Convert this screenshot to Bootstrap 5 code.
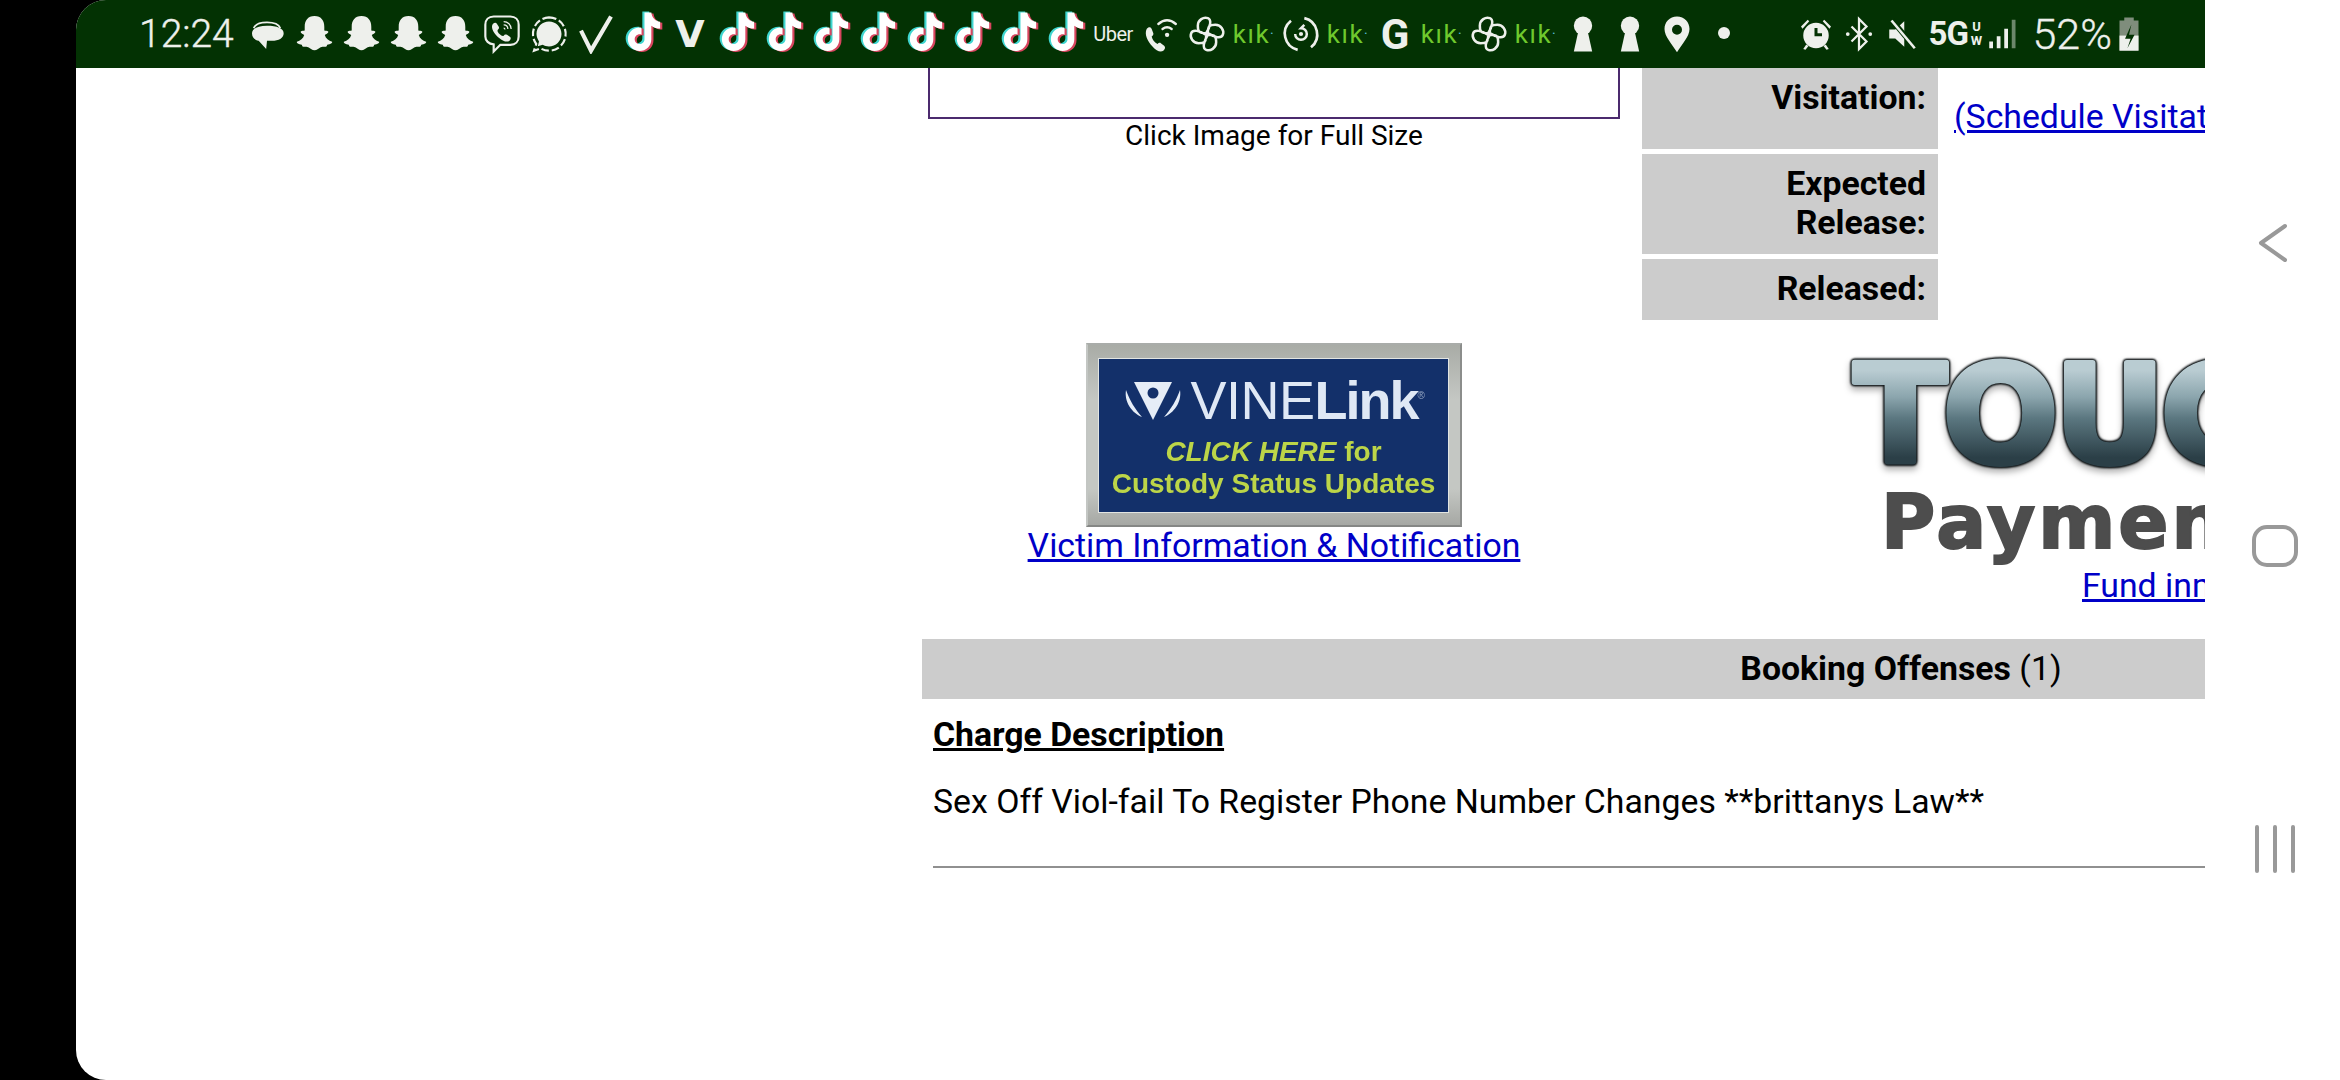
<!DOCTYPE html>
<html lang="en">
<head>
  <meta charset="UTF-8" />
  <title>Booking Details</title>
  <link href="https://cdn.jsdelivr.net/npm/bootstrap@5.3.3/dist/css/bootstrap.min.css" rel="stylesheet">
  <style>
    html, body { height: 100%; }
    body { background: #000; font-family: Roboto, "Liberation Sans", sans-serif; color: #000; overflow: hidden; }
    a { color: #0000c8; }
    .shell { height: 1080px; padding-left: 76px; }
    .screen { background: #fff; border-radius: 30px 0 0 30px; overflow: hidden; height: 100%; }
    .main-side { width: 2129px; flex: none; }
    .nav-side { width: 135px; flex: none; padding: 12px 0 0 4px; gap: 253px; }
    .nav-side svg { width: 50px; height: 50px; stroke: #999; fill: none; stroke-width: 4; stroke-linecap: round; stroke-linejoin: round; }

    .status { height: 68px; background: #033203; color: #eef0ec; padding-left: 63px; flex: none; }
    .clock { font-size: 39px; font-weight: 300; -webkit-text-stroke: .4px #eef0ec; width: 104.500px; flex: none; line-height: 1; }
    .cell { width: 47px; height: 68px; flex: none; }
    .cell svg { width: 40px; height: 40px; fill: #eef0ec; }
    .cell svg.big { width: 47px; height: 47px; }
    .cell svg.tt { width: 48px; height: 48px; margin-top: -2px; }
    .cell svg.tiny { width: 14px; height: 14px; margin-top: -2px; }
    .kik { color: #6fc92d; font-size: 26px; font-weight: 400; letter-spacing: 1.500px; }
    .kik i { color: #5bc0de; font-style: normal; font-size: 14px; margin-left: 0; }
    .uber { font-size: 20px; letter-spacing: -.5px; }
    .vee { font-family: "DejaVu Sans", sans-serif; font-size: 38px; font-weight: 700; }
    .gee { font-size: 42px; font-weight: 700; }
    .right-group { margin-left: 47px; flex: none; }
    .right-group .cell { width: 43px; }
    .right-group .cell svg { width: 36px; height: 36px; }
    .five { font-size: 33px; font-weight: 700; letter-spacing: -1px; margin-left: 5px; width: 39px; }
    .uw { font-size: 13px; line-height: 14px; font-weight: 700; width: 18px; }
    .bars { width: 36px; height: 36px; fill: #eef0ec; margin-left: 1px; }
    .pct { font-size: 43px; font-weight: 300; -webkit-text-stroke: .3px #eef0ec; line-height: 1; margin-left: 10px; }
    .batt { width: 38px; height: 38px; fill: #eef0ec; margin-left: -2px; }

    .page { flex: 1; overflow: hidden; padding-left: 846px; }
    .sheet { width: 1958px; font-size: 33.800px; line-height: 39px; }
    .left-part { width: 720px; flex: none; }
    .photo-box { width: 692px; height: 51px; margin-left: 6px; border: 2px solid #4b2a6e; border-top: 0; background: #fff; }
    .caption { font-size: 28px; line-height: 34px; width: 692px; margin-left: 6px; }
    .info-row { margin-bottom: 5px; }
    .info-label { width: 296px; background: #ccc; font-weight: 700; text-align: right; padding: 0 12px; flex: none; }
    .row-a { height: 81px; padding-top: 10px; }
    .row-b { height: 100px; padding-top: 10px; }
    .row-c { height: 61px; padding-top: 10px; }
    .info-value { padding: 29px 0 0 16px; white-space: nowrap; }

    .links-row { margin-top: 18px; height: 296px; }
    .vine-cell { width: 692px; margin-left: 6px; flex: none; }
    .vine-frame { width: 376px; height: 184px; padding: 14px 12px 13px 11px; background: linear-gradient(180deg, #a9aca6, #c4c7c3 30%, #c4c7c3 80%, #a6a8a4); border: 2px solid; border-color: #a9aca9 #8b8d8b #858785 #c3c6c3; flex: none; }
    .vine-inner { height: 100%; padding-top: 13px; background: #13306a; color: #dfe8f5; filter: blur(.6px); box-shadow: 0 0 0 1px #e2e5e2; }
    .vine-name { font-family: "Liberation Sans", sans-serif; font-size: 54px; line-height: 56px; letter-spacing: -.5px; margin-bottom: 8px; }
    .vine-name b { font-weight: 700; letter-spacing: -2px; }
    .vine-name sup { font-size: 10px; top: -20px; opacity: .6; }
    .vine-line { font-family: "Liberation Sans", sans-serif; font-size: 28px; line-height: 32px; color: #bcd548; font-weight: 700; text-align: center; white-space: nowrap; }
    .vine-line em { font-style: italic; }
    .vine-link { line-height: 37px; margin-top: 0; white-space: nowrap; }
    .touch-cell { padding: 17px 0 0 231px; white-space: nowrap; }
    .touch-art { display: block; overflow: visible; filter: drop-shadow(0 0 1px #14191b) drop-shadow(0 0 1px #14191b) drop-shadow(0 0 .6px #14191b) drop-shadow(0 4px 3px rgba(0,0,0,.3)); }
    .touch-art text { font-family: "DejaVu Sans", sans-serif; font-weight: 700; font-size: 136px; letter-spacing: -4px; stroke-width: 6px; stroke-linejoin: round; }
    .pay-word { font-family: "DejaVu Sans", sans-serif; font-weight: 700; font-size: 74px; line-height: 76px; letter-spacing: 3px; color: #4d4d4d; -webkit-text-stroke: 2px #4d4d4d; margin: 12px 0 0 30px; }
    .fund-link { padding-left: 231px; margin-top: 6px; }

    .band { height: 60px; background: #ccc; line-height: 60px; text-align: center; }
    .band b { font-weight: 700; }
    .charges { padding: 16px 0 0 11px; }
    .charge-title { font-weight: 700; text-decoration: underline; line-height: 39px; }
    .charge-text { margin-top: 28px; line-height: 39px; }
    .charge-rule { margin: 45px 0 0; border: 0; border-top: 2px solid #909090; opacity: 1; }
  </style>
</head>
<body>
  <svg class="d-none">
    <symbol id="ic-bubble" viewBox="0 0 48 48"><path d="M8 17c2-5 8-7 16-7s14 2 16 7" fill="none" stroke="#eef0ec" stroke-width="2"/><path d="M6 23c0-5 6-9 18-9s20 3 20 9-6 9-14 9h-6l-1 10-9-10c-5-1-8-4-8-9z"/></symbol>
    <symbol id="ic-snap" viewBox="0 0 48 48"><path d="M24 5c7 0 10 5 10 11v4c1 .5 3 0 4 1 .8 1-2.500 3-3.500 3.500 1 3.500 4 6 7.500 7 .5 1.500-2 2.500-5 3-.5 1-.3 2-1.500 2-2 0-4-.5-6 1-1.500 1-3 2.500-5.500 2.500s-4-1.500-5.500-2.500c-2-1.500-4-1-6-1-1.200 0-1-1-1.500-2-3-.5-5.500-1.500-5-3 3.500-1 6.500-3.500 7.500-7-1-.5-4.300-2.500-3.500-3.500 1-1 3-.5 4-1v-4c0-6 3-11 10-11z"/></symbol>
    <symbol id="ic-viber" viewBox="0 0 48 48"><path d="M14 3h20c6 0 10 4 10 10v14c0 6-4 10-10 10H22l-8 8v-8.500C8 36 4 32 4 27V13C4 7 8 3 14 3z" fill="none" stroke="#eef0ec" stroke-width="2.600"/><path d="M13 12c2-2 4-2 5 0l2 3c1 2 0 3-1 4-1 1 0 3 2 5s4 3 5 2c1-1 2-2 4-1l3 2c2 1 2 3 0 5-3 2-7 1-12-3-7-5-11-13-8-17z"/><path d="M26 9c5 0 9 4 9 9M26 13c3 0 5 2 5 5M26 17c1 0 1.500 .5 1.500 1.500" fill="none" stroke="#eef0ec" stroke-width="1.500"/></symbol>
    <symbol id="ic-signal" viewBox="0 0 48 48"><path d="M24 4a20 20 0 1 1-10 37.300L6 44l2.700-8A20 20 0 0 1 24 4z" fill="none" stroke="#eef0ec" stroke-width="2.600" stroke-dasharray="9 3.500"/><path d="M24 9c8 0 15 6.500 15 15s-7 15-15 15c-2.800 0-5.500-.8-7.500-2l-6 1.700L12 33c-1.500-2.500-3-5.500-3-9C9 15.500 16 9 24 9z"/></symbol>
    <symbol id="ic-check" viewBox="0 0 48 48"><path d="M6 20l12 24L42 3" fill="none" stroke="#eef0ec" stroke-width="5"/></symbol>
    <symbol id="ic-tt" viewBox="0 0 48 48">
      <path transform="translate(-2.200 -1)" fill="#3fd6d0" d="M25 3h7c.5 5 4 9 9 9.500v7c-3.300 0-6.500-1-9-3v14c0 7-5.500 12-12 12S8 37 8 30.500s5-12 12-12c.7 0 1.300 0 2 .2v7c-.6-.3-1.300-.4-2-.4-2.700 0-5 2.300-5 5s2.300 5 5 5 5-2.300 5-5z"/>
      <path transform="translate(2.200 1)" fill="#d9455f" d="M25 3h7c.5 5 4 9 9 9.500v7c-3.300 0-6.500-1-9-3v14c0 7-5.500 12-12 12S8 37 8 30.500s5-12 12-12c.7 0 1.300 0 2 .2v7c-.6-.3-1.300-.4-2-.4-2.700 0-5 2.300-5 5s2.300 5 5 5 5-2.300 5-5z"/>
      <path fill="#fff" d="M25 3h7c.5 5 4 9 9 9.500v7c-3.300 0-6.500-1-9-3v14c0 7-5.500 12-12 12S8 37 8 30.500s5-12 12-12c.7 0 1.300 0 2 .2v7c-.6-.3-1.300-.4-2-.4-2.700 0-5 2.300-5 5s2.300 5 5 5 5-2.300 5-5z"/>
    </symbol>
    <symbol id="ic-wifi" viewBox="0 0 48 48"><path d="M8 18c2-3 5-3 6 0l2 5c.5 2-1 3-2 4 1 4 3 7 7 9 1-1 3-2 4-1l4 3c2 2 1 4-1 6-3 2-8 1-13-5C9 33 5 24 8 18z"/><path d="M22 12c7-6 14-6 21 0M27 18c4-3 7-3 11 0" fill="none" stroke="#eef0ec" stroke-width="2.800" stroke-linecap="round"/><circle cx="32.500" cy="25" r="2.600"/></symbol>
    <symbol id="ic-pin" viewBox="0 0 48 48"><path d="M23 23c-9 0-10-2-10-9S20 3 25 5s3 10-2 18zM25 23c0-9 2-10 9-10s11 7 9 12-10 3-18-2zM25 25c9 0 10 2 10 9s-7 11-12 9-3-10 2-18zM23 25c0 9-2 10-9 10S3 28 5 23s10-3 18 2z" fill="none" stroke="#eef0ec" stroke-width="3"/></symbol>
    <symbol id="ic-swirl" viewBox="0 0 48 48"><path d="M28 5a20 20 0 0 1 8 35M20 43A20 20 0 0 1 12 8" fill="none" stroke="#eef0ec" stroke-width="3.200"/><path d="M17 24a7 7 0 1 0 7-7l4-4" fill="none" stroke="#eef0ec" stroke-width="3"/><circle cx="24" cy="24" r="2.500"/></symbol>
    <symbol id="ic-key" viewBox="0 0 48 48"><circle cx="24" cy="14" r="11"/><path d="M19 18h10l6 27H13z"/></symbol>
    <symbol id="ic-place" viewBox="0 0 48 48"><path fill-rule="evenodd" d="M24 3c9 0 15 7 15 15 0 9-9 18-15 28C18 36 9 27 9 18 9 10 15 3 24 3zm0 10a6 6 0 1 0 0 12 6 6 0 0 0 0-12z"/></symbol>
    <symbol id="ic-alarm" viewBox="0 0 48 48"><path fill-rule="evenodd" d="M24 9a17 17 0 1 1 0 34 17 17 0 0 1 0-34zm-2 7v11h10v-4h-6v-7z"/><path d="M4 14L13 5l2 2-9 10zM44 14L35 5l-2 2 9 10zM11 38l-4 6 3 1 4-5zM37 38l4 6-3 1-4-5z"/></symbol>
    <symbol id="ic-bt" viewBox="0 0 48 48"><path d="M14 14l20 20-10 10V4l10 10-20 20" fill="none" stroke="#eef0ec" stroke-width="3"/><circle cx="9" cy="24" r="2.500"/><circle cx="39" cy="24" r="2.500"/></symbol>
    <symbol id="ic-mute" viewBox="0 0 48 48"><path d="M7 18h8L27 7v34L15 30H7z"/><path d="M11 6l30 36" stroke="#033203" stroke-width="7"/><path d="M10 6l31 37" stroke="#eef0ec" stroke-width="3.500"/></symbol>
    <symbol id="ic-bars" viewBox="0 0 48 48"><rect x="3" y="34" width="5" height="9"/><rect x="13" y="27" width="5" height="16"/><rect x="23" y="17" width="5" height="26"/><rect x="33" y="5" width="5" height="38" opacity=".45"/></symbol>
    <symbol id="ic-batt" viewBox="0 0 48 48"><path d="M18 3h12v4h6v38H12V7h6z" fill="#7f8d7c"/><path d="M12 26h24v19H12z"/><path d="M27 12l-8 18h7l-4 12 9-17h-7z" fill="#033203"/></symbol>
    <symbol id="ic-vine" viewBox="0 0 60 44"><path d="M11 4h38L30 42z" fill="#e6edf7"/><circle cx="30" cy="15" r="5.500" fill="#13306a"/><path d="M3 12c-2 12 6 23 16 27-7-8-12-16-16-27zM57 12c2 12-6 23-16 27 7-8 12-16 16-27z" fill="#e6edf7"/></symbol>
  </svg>

  <div class="shell">
    <div class="screen d-flex">
      <div class="main-side d-flex flex-column">
        <div class="status d-flex align-items-center">
          <div class="clock">12:24</div>
          <div class="cell d-flex align-items-center justify-content-center"><svg><use href="#ic-bubble"/></svg></div>
          <div class="cell d-flex align-items-center justify-content-center"><svg class="big"><use href="#ic-snap"/></svg></div>
          <div class="cell d-flex align-items-center justify-content-center"><svg class="big"><use href="#ic-snap"/></svg></div>
          <div class="cell d-flex align-items-center justify-content-center"><svg class="big"><use href="#ic-snap"/></svg></div>
          <div class="cell d-flex align-items-center justify-content-center"><svg class="big"><use href="#ic-snap"/></svg></div>
          <div class="cell d-flex align-items-center justify-content-center"><svg><use href="#ic-viber"/></svg></div>
          <div class="cell d-flex align-items-center justify-content-center"><svg><use href="#ic-signal"/></svg></div>
          <div class="cell d-flex align-items-center justify-content-center"><svg><use href="#ic-check"/></svg></div>
          <div class="cell d-flex align-items-center justify-content-center"><svg class="tt"><use href="#ic-tt"/></svg></div>
          <div class="cell vee d-flex align-items-center justify-content-center">V</div>
          <div class="cell d-flex align-items-center justify-content-center"><svg class="tt"><use href="#ic-tt"/></svg></div>
          <div class="cell d-flex align-items-center justify-content-center"><svg class="tt"><use href="#ic-tt"/></svg></div>
          <div class="cell d-flex align-items-center justify-content-center"><svg class="tt"><use href="#ic-tt"/></svg></div>
          <div class="cell d-flex align-items-center justify-content-center"><svg class="tt"><use href="#ic-tt"/></svg></div>
          <div class="cell d-flex align-items-center justify-content-center"><svg class="tt"><use href="#ic-tt"/></svg></div>
          <div class="cell d-flex align-items-center justify-content-center"><svg class="tt"><use href="#ic-tt"/></svg></div>
          <div class="cell d-flex align-items-center justify-content-center"><svg class="tt"><use href="#ic-tt"/></svg></div>
          <div class="cell d-flex align-items-center justify-content-center"><svg class="tt"><use href="#ic-tt"/></svg></div>
          <div class="cell uber d-flex align-items-center justify-content-center">Uber</div>
          <div class="cell d-flex align-items-center justify-content-center"><svg><use href="#ic-wifi"/></svg></div>
          <div class="cell d-flex align-items-center justify-content-center"><svg><use href="#ic-pin"/></svg></div>
          <div class="cell kik d-flex align-items-center justify-content-center">kık<i>·</i></div>
          <div class="cell d-flex align-items-center justify-content-center"><svg><use href="#ic-swirl"/></svg></div>
          <div class="cell kik d-flex align-items-center justify-content-center">kık<i>·</i></div>
          <div class="cell gee d-flex align-items-center justify-content-center">G</div>
          <div class="cell kik d-flex align-items-center justify-content-center">kık<i>·</i></div>
          <div class="cell d-flex align-items-center justify-content-center"><svg><use href="#ic-pin"/></svg></div>
          <div class="cell kik d-flex align-items-center justify-content-center">kık<i>·</i></div>
          <div class="cell d-flex align-items-center justify-content-center"><svg><use href="#ic-key"/></svg></div>
          <div class="cell d-flex align-items-center justify-content-center"><svg><use href="#ic-key"/></svg></div>
          <div class="cell d-flex align-items-center justify-content-center"><svg><use href="#ic-place"/></svg></div>
          <div class="cell d-flex align-items-center justify-content-center"><svg class="tiny" viewBox="0 0 14 14"><circle cx="7" cy="7" r="6"/></svg></div>
          <div class="right-group d-flex align-items-center">
            <div class="cell d-flex align-items-center justify-content-center"><svg><use href="#ic-alarm"/></svg></div>
            <div class="cell d-flex align-items-center justify-content-center"><svg><use href="#ic-bt"/></svg></div>
            <div class="cell d-flex align-items-center justify-content-center"><svg><use href="#ic-mute"/></svg></div>
            <div class="five">5G</div>
            <div class="uw text-center">U<br>W</div>
            <svg class="bars"><use href="#ic-bars"/></svg>
            <div class="pct">52%</div>
            <svg class="batt"><use href="#ic-batt"/></svg>
          </div>
        </div>

        <div class="page">
          <div class="sheet">
            <div class="d-flex">
              <div class="left-part text-center">
                <div class="photo-box"></div>
                <div class="caption">Click Image for Full Size</div>
              </div>
              <div>
                <div class="info-row d-flex">
                  <div class="info-label row-a">Visitation:</div>
                  <div class="info-value"><a href="#">(Schedule Visitation)</a></div>
                </div>
                <div class="info-row d-flex">
                  <div class="info-label row-b">Expected<br>Release:</div>
                </div>
                <div class="info-row d-flex">
                  <div class="info-label row-c">Released:</div>
                </div>
              </div>
            </div>

            <div class="links-row d-flex">
              <div class="vine-cell d-flex flex-column align-items-center">
                <div class="vine-frame">
                  <div class="vine-inner">
                    <div class="vine-name d-flex align-items-center justify-content-center gap-2">
                      <svg width="60" height="44"><use href="#ic-vine"/></svg>
                      <span>VINE<b>Link</b><sup>®</sup></span>
                    </div>
                    <div class="vine-line"><em>CLICK HERE</em> for</div>
                    <div class="vine-line">Custody Status Updates</div>
                  </div>
                </div>
                <a class="vine-link" href="#">Victim Information &amp; Notification</a>
              </div>
              <div class="touch-cell">
                <svg class="touch-art" width="360" height="112">
                  <defs>
                    <linearGradient id="touch-fill" gradientUnits="userSpaceOnUse" x1="0" y1="0" x2="0" y2="106">
                      <stop offset=".1" stop-color="#b9ccd2"/>
                      <stop offset=".35" stop-color="#8ba5ad"/>
                      <stop offset=".55" stop-color="#5b7780"/>
                      <stop offset=".92" stop-color="#2b3f47"/>
                    </linearGradient>
                  </defs>
                  <text x="3" y="102" fill="url(#touch-fill)" stroke="url(#touch-fill)">TOUCH</text>
                </svg>
                <div class="pay-word">Payment</div>
                <div class="fund-link"><a href="#">Fund inmate account</a></div>
              </div>
            </div>

            <div class="band"><b>Booking Offenses</b> (1)</div>
            <div class="charges">
              <div class="charge-title">Charge Description</div>
              <div class="charge-text">Sex Off Viol-fail To Register Phone Number Changes **brittanys Law**</div>
              <hr class="charge-rule">
            </div>
          </div>
        </div>
      </div>

      <div class="nav-side d-flex flex-column align-items-center justify-content-center">
        <svg viewBox="0 0 50 50"><path d="M35 8L11 25l24 17"/></svg>
        <svg viewBox="0 0 50 50"><rect x="4" y="6" width="42" height="38" rx="13"/></svg>
        <svg viewBox="0 0 50 50"><path d="M7 3v44M25 3v44M43 3v44"/></svg>
      </div>
    </div>
  </div>
</body>
</html>
